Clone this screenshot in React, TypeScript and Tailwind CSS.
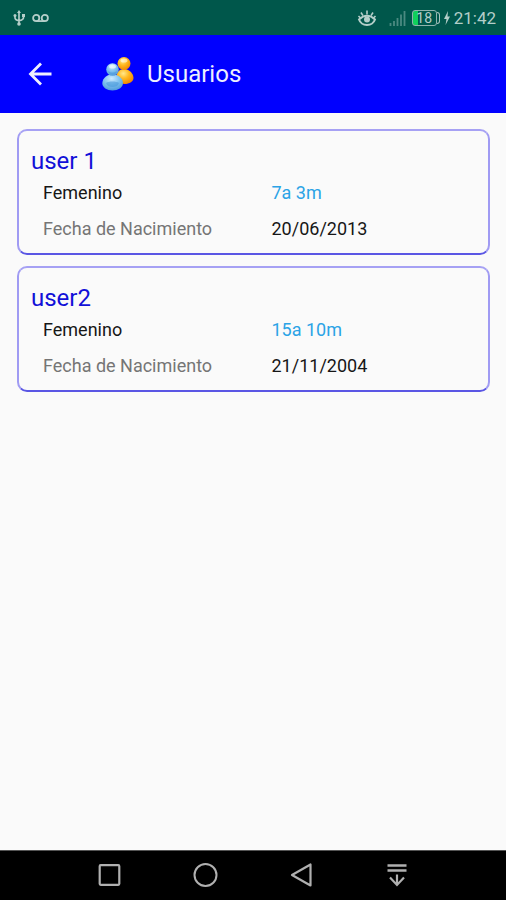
type User = {
  name: string;
  gender: string;
  age: string;
  birthDate: string;
};

const users: User[] = [
  { name: 'user 1', gender: 'Femenino', age: '7a 3m', birthDate: '20/06/2013' },
  { name: 'user2', gender: 'Femenino', age: '15a 10m', birthDate: '21/11/2004' },
];

function StatusBar() {
  return (
    <div className="flex h-[35px] items-center justify-between bg-[#00574b] pr-[10px] pl-3 text-[#b4cec9]">
      <div className="flex items-center gap-[6px]">
        {/* USB */}
        <svg className="h-4 w-[14px]" viewBox="0 0 14 16" fill="none" stroke="currentColor" strokeWidth="1.7">
          <path d="M7 2v12M3 5.5v2.2Q3 10 7 10.6Q11.5 10 11.5 7.5V5" />
          <path d="M7 0l2 3H5z" fill="currentColor" stroke="none" />
          <circle cx="3" cy="5.5" r="1.5" fill="currentColor" stroke="none" />
          <path d="M10 4h3v3h-3z" fill="currentColor" stroke="none" />
          <circle cx="7" cy="14" r="1.8" fill="currentColor" stroke="none" />
        </svg>
        {/* Voicemail */}
        <svg className="h-[10px] w-[17px]" viewBox="0 0 17 10" fill="none" stroke="currentColor" strokeWidth="1.8">
          <circle cx="4.2" cy="5" r="3.1" />
          <circle cx="12.8" cy="5" r="3.1" />
          <path d="M4.2 8.1h8.6" />
        </svg>
      </div>

      <div className="flex items-center">
        {/* Eye comfort */}
        <svg className="mr-3 h-[18px] w-5" viewBox="0 0 20 18" fill="none" stroke="currentColor" strokeWidth="2">
          <path d="M2 10.5Q10 3 18 10.5Q16 16 10 16Q4 16 2 10.5z" />
          <circle cx="10" cy="10.5" r="3" fill="currentColor" stroke="none" />
          <path d="M10 1.5v4M4 3.5l2 3.2M16 3.5l-2 3.2M1.5 7l2 2M18.5 7l-2 2" strokeWidth="1.6" />
        </svg>
        {/* Signal */}
        <svg className="mr-[6px] h-4 w-[17px] text-[#4b8a81]" viewBox="0 0 17 16" fill="none" stroke="currentColor" strokeWidth="1.8">
          <path d="M1.5 16v-3M5 16v-5M8.5 16V8M12 16V4.5M15.5 16V1" />
        </svg>
        {/* Battery */}
        <div className="flex items-center">
          <div className="flex h-4 w-[25px] items-center justify-center rounded-[3px] border border-[#8fb3ad] bg-linear-to-r from-[#10d05c] from-20% to-transparent to-20% text-[14px] leading-none">
            18
          </div>
          <div className="h-3 w-[3px] rounded-r-sm border border-l-0 border-[#a9c4bf]" />
        </div>
        <svg className="mx-1 h-[14px] w-[6px]" viewBox="0 0 6 14" fill="currentColor">
          <path d="M4 0L0 8h2.5L1.5 14L6 5.5H3.5z" />
        </svg>
        <span className="text-[17px] leading-5">21:42</span>
      </div>
    </div>
  );
}

function UsersIcon() {
  return (
    <svg className="h-9 w-8" viewBox="0 0 32 36" aria-hidden="true">
      <defs>
        <radialGradient id="gold" cx="40%" cy="30%" r="75%">
          <stop offset="0" stopColor="#ffe88c" />
          <stop offset="0.45" stopColor="#ffb81f" />
          <stop offset="1" stopColor="#ee8200" />
        </radialGradient>
        <radialGradient id="sky" cx="45%" cy="25%" r="80%">
          <stop offset="0" stopColor="#cdeaff" />
          <stop offset="0.5" stopColor="#7fc1ee" />
          <stop offset="1" stopColor="#4a95d8" />
        </radialGradient>
      </defs>
      <path d="M14.5 19c1-4 4-6 8-6s8.5 4 9 8.5c.3 4-4 6.5-9 6.5s-8-4-8-9z" fill="url(#gold)" />
      <circle cx="22" cy="7.5" r="6.5" fill="url(#gold)" />
      <ellipse cx="22" cy="4.5" rx="3.5" ry="2" fill="#fff" opacity="0.55" />
      <path d="M.3 27C1 21.5 5 18.5 10.5 18.5s10 3 10.5 8.5c.2 4.5-5 7.5-10.5 7.5S.1 31.5.3 27z" fill="url(#sky)" />
      <path d="M4 27c3-2 10-2 13 0-1 3-4 4-6.5 4S5 30 4 27z" fill="#3f91d8" opacity="0.5" />
      <circle cx="10.5" cy="13.5" r="6.3" fill="url(#sky)" />
      <ellipse cx="10.5" cy="10.5" rx="3.5" ry="2" fill="#fff" opacity="0.6" />
      <path d="M6 15q4.5 3 9 0q-1.5 3.5-4.5 3.5T6 15z" fill="#3f91d8" opacity="0.4" />
    </svg>
  );
}

function UserCard({ user }: { user: User }) {
  return (
    <li className="rounded-[10px] border-2 border-b-[#5a56e4] border-l-[#a09bf3] border-r-[#a09bf3] border-t-[#a6a1f4] pt-4 pb-[6px] pl-3">
      <h2 className="text-[24px] leading-7 text-[#1210d8]">{user.name}</h2>
      <div className="grid grid-cols-2 gap-x-3 pl-3 text-[18px] leading-9 text-[#161616]">
        <span>{user.gender}</span>
        <span className="text-[#2ba3e6]">{user.age}</span>
        <span className="text-[#757575]">Fecha de Nacimiento</span>
        <span>{user.birthDate}</span>
      </div>
    </li>
  );
}

function NavigationBar() {
  return (
    <nav className="flex h-[50px] justify-center border-t border-[#555] bg-black pb-px text-[#b0b0b0]">
      <button type="button" aria-label="Recientes" className="flex w-24 items-center justify-center">
        <svg className="h-[26px] w-[26px]" viewBox="0 0 26 26" fill="none" stroke="currentColor" strokeWidth="2.2">
          <rect x="3.7" y="3.2" width="19.6" height="19.6" rx="1" />
        </svg>
      </button>
      <button type="button" aria-label="Inicio" className="flex w-24 items-center justify-center">
        <svg className="h-[26px] w-[26px]" viewBox="0 0 26 26" fill="none" stroke="currentColor" strokeWidth="2">
          <circle cx="13.5" cy="13" r="11" />
        </svg>
      </button>
      <button type="button" aria-label="Volver" className="flex w-24 items-center justify-center">
        <svg className="h-[26px] w-[26px]" viewBox="0 0 26 26" fill="none" stroke="currentColor" strokeWidth="2.2" strokeLinejoin="round">
          <path d="M22.5 2.5v21L4 13z" />
        </svg>
      </button>
      <button type="button" aria-label="Notificaciones" className="flex w-24 items-center justify-center">
        <svg className="h-[26px] w-[26px]" viewBox="0 0 26 26" fill="none" stroke="currentColor" strokeWidth="2.2">
          <path d="M3.5 3.5h19M3.5 8.5h19" strokeWidth="2.6" />
          <path d="M13 12.5v11M6 15.5l7 7.5 7-7.5" />
        </svg>
      </button>
    </nav>
  );
}

export default function App() {
  return (
    <div className="flex min-h-screen flex-col bg-[#fafafa] font-[Roboto,sans-serif]">
      <StatusBar />

      <header className="flex h-[78px] items-center bg-[#0000ff] pl-7 text-[#eeeeff]">
        <button type="button" aria-label="Atrás" className="mr-[50px]">
          <svg className="h-6 w-6" viewBox="0 0 24 24" fill="none" stroke="currentColor" strokeWidth="2.8">
            <path d="M23.5 12H2.5M13 1.5L2.5 12L13 22.5" />
          </svg>
        </button>
        <UsersIcon />
        <h1 className="ml-[13px] text-[24px] leading-8">Usuarios</h1>
      </header>

      <main className="flex-1 pt-4 pr-4 pl-[17px]">
        <ul className="flex flex-col gap-[11px]">
          {users.map((user) => (
            <UserCard key={user.name} user={user} />
          ))}
        </ul>
      </main>

      <NavigationBar />
    </div>
  );
}
